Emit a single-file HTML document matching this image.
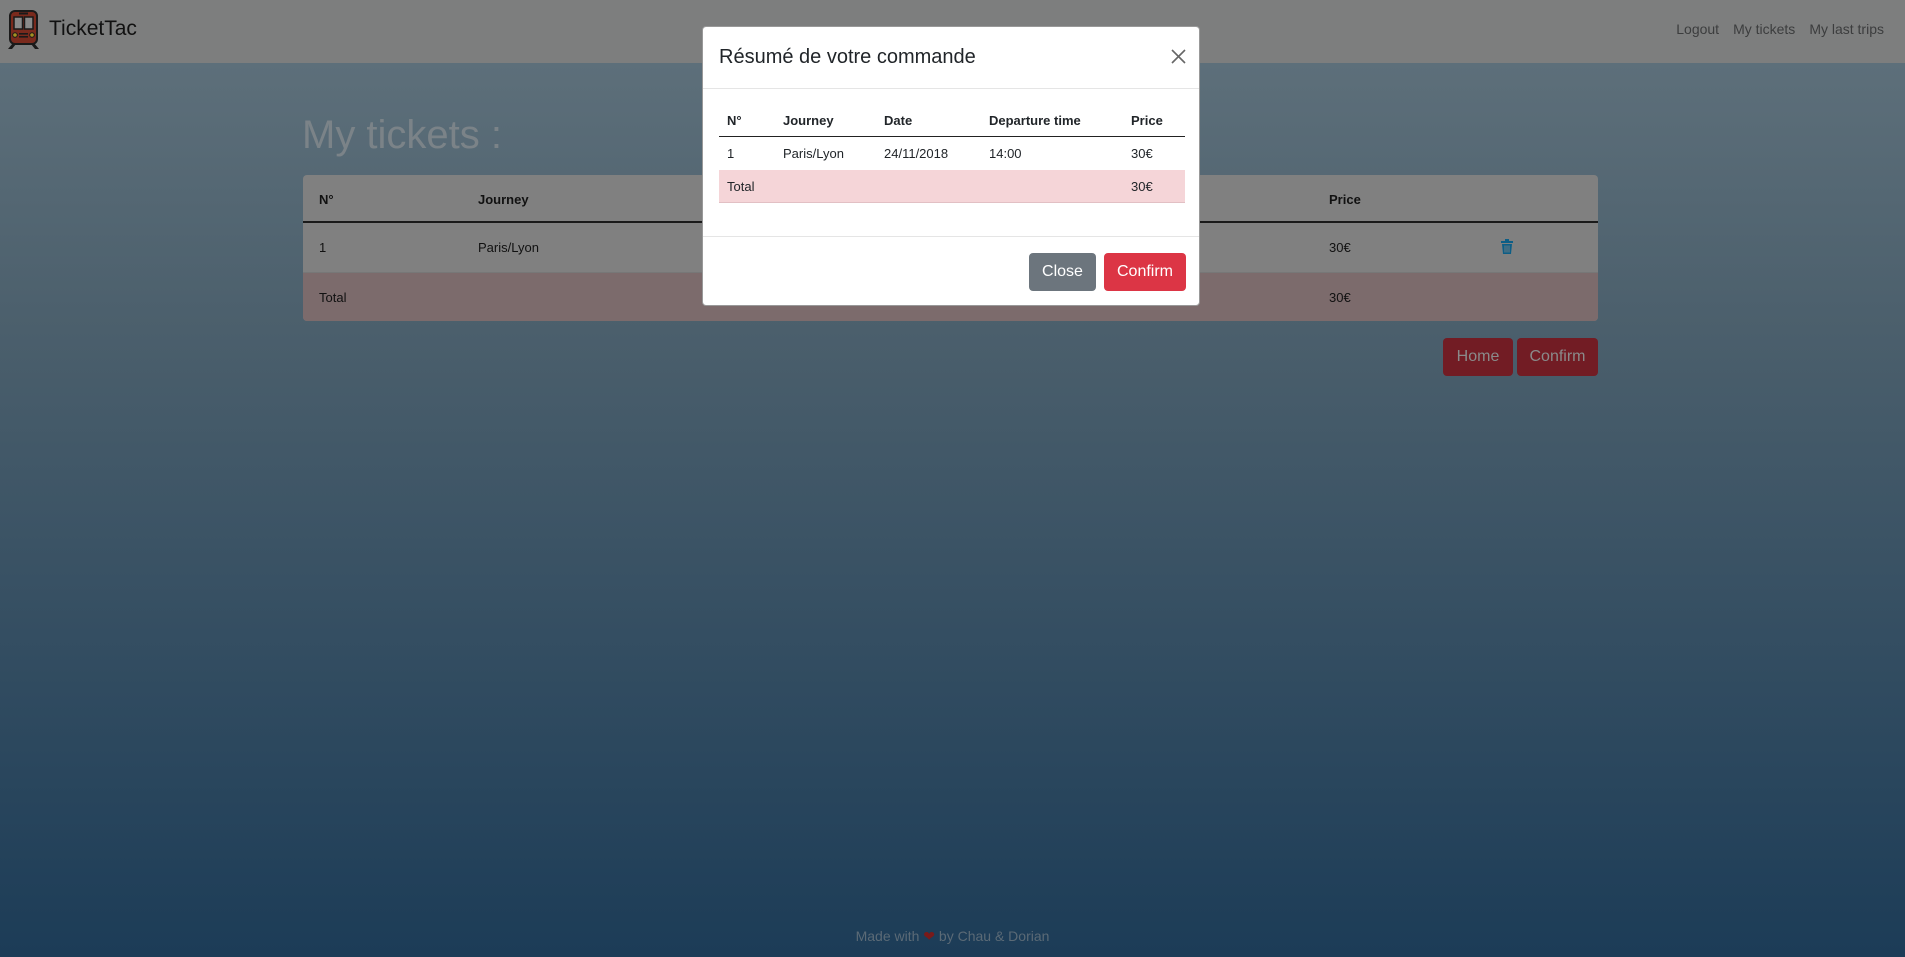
<!DOCTYPE html>
<html><head><meta charset="utf-8"><style>
*{box-sizing:border-box;margin:0;padding:0}
body{width:1905px;height:957px;overflow:hidden;font-family:"Liberation Sans",Arial,sans-serif;position:relative;background:linear-gradient(#5d6f7a 63px,#4b5f6c 330px,#1c3c57 957px)}
.nav{position:absolute;left:0;top:0;width:1905px;height:63px;background:#7d7e7e}
.brand{position:absolute;left:49px;top:17px;font-size:21px;color:#111}
.links{position:absolute;right:21px;top:21px;font-size:14px;color:#3c3d3e}
.links span{margin-left:14px}
h1{position:absolute;left:302px;top:113px;font-size:40px;font-weight:normal;color:#7b8388}
.tbl{position:absolute;left:303px;top:175px;width:1295px;background:#808080;border-radius:4px;overflow:hidden;font-size:13px;color:#111}
.row{position:relative;height:49px}
.row span{position:absolute;top:17px}
.hd{border-bottom:2px solid #1a1a1a;height:48px;font-weight:bold}
.tot{background:#7c6b6c;border-top:1px solid #777}
.btn{position:absolute;height:38px;border-radius:4px;font-size:16px;line-height:38px;text-align:center}
.foot{position:absolute;left:0;width:1905px;top:928px;text-align:center;font-size:14px;color:#5b6a76}
.modal{position:absolute;left:702px;top:26px;width:498px;height:280px;background:#fff;border-radius:4px;border:1px solid #999}
.mh{height:62px;border-bottom:1px solid #e5e5e5;position:relative}
.mh .t{position:absolute;left:16px;top:19px;font-size:20px;color:#212529}
.mt{position:absolute;left:16px;top:77px;width:466px;font-size:13px;color:#212529}
.mt .r{position:relative;height:33px}
.mt .r span{position:absolute;top:9px}
.mf{position:absolute;left:0;top:209px;width:496px;border-top:1px solid #e5e5e5}
</style></head><body>
<div class="nav">
<svg style="position:absolute;left:7px;top:10px" width="33" height="40" viewBox="0 0 33 40">
<path d="M6 33 L1 39 H5 L9 34 Z M27 33 L32 39 H28 L24 34 Z" fill="#1a1a1a"/>
<rect x="3" y="1" width="27" height="33" rx="5" fill="#7a2a1d" stroke="#1a1a1a" stroke-width="2"/>
<rect x="7" y="7" width="8.5" height="12" fill="#8a8a8a" stroke="#1a1a1a" stroke-width="1.5"/>
<rect x="17.5" y="7" width="8.5" height="12" fill="#8a8a8a" stroke="#1a1a1a" stroke-width="1.5"/>
<rect x="12" y="2.5" width="9" height="2" fill="#1a1a1a"/>
<circle cx="8" cy="25" r="2.3" fill="#a59020" stroke="#1a1a1a"/><circle cx="25" cy="25" r="2.3" fill="#a59020" stroke="#1a1a1a"/>
<rect x="12" y="23" width="9" height="1.6" fill="#1a1a1a"/><rect x="12" y="26" width="9" height="1.6" fill="#1a1a1a"/>
</svg>
<div class="brand">TicketTac</div>
<div class="links"><span>Logout</span><span>My tickets</span><span>My last trips</span></div>
</div>
<h1>My tickets :</h1>
<div class="tbl">
<div class="row hd"><span style="left:16px">N°</span><span style="left:175px">Journey</span><span style="left:1026px">Price</span></div>
<div class="row"><span style="left:16px">1</span><span style="left:175px">Paris/Lyon</span><span style="left:1026px">30€</span>
<svg style="position:absolute;left:1198px;top:16px" width="12" height="15" viewBox="0 0 12 15"><path d="M0 2h12v2H0z M4 0h4v2H4z M1 5h10l-1 10H2z" fill="#0d5e86"/><path d="M4 6.5v7M6 6.5v7M8 6.5v7" stroke="#808080" stroke-width="0.9"/></svg></div>
<div class="row tot"><span style="left:16px">Total</span><span style="left:1026px">30€</span></div>
</div>
<div class="btn" style="left:1443px;top:338px;width:70px;background:#721c24;color:#8a8a8a">Home</div>
<div class="btn" style="left:1517px;top:338px;width:81px;background:#721c24;color:#8a8a8a">Confirm</div>
<div class="foot">Made with <span style="color:#7a1a1a">❤</span> by Chau &amp; Dorian</div>
<div class="modal">
<div class="mh"><div class="t">Résumé de votre commande</div>
<svg style="position:absolute;left:468px;top:22px" width="15" height="15"><path d="M1 1L14 14M14 1L1 14" stroke="#666" stroke-width="1.6"/></svg></div>
<div class="mt">
<div class="r" style="border-bottom:1.5px solid #222;font-weight:bold"><span style="left:8px">N°</span><span style="left:64px">Journey</span><span style="left:165px">Date</span><span style="left:270px">Departure time</span><span style="left:412px">Price</span></div>
<div class="r"><span style="left:8px">1</span><span style="left:64px">Paris/Lyon</span><span style="left:165px">24/11/2018</span><span style="left:270px">14:00</span><span style="left:412px">30€</span></div>
<div class="r" style="background:#f5d5d8;border-bottom:1px solid #e2c0c4"><span style="left:8px">Total</span><span style="left:412px">30€</span></div>
</div>
<div class="mf"></div>
<div class="btn" style="left:326px;top:226px;width:67px;background:#6c757d;color:#fff">Close</div>
<div class="btn" style="left:401px;top:226px;width:82px;background:#dc3545;color:#fff">Confirm</div>
</div>
</body></html>
